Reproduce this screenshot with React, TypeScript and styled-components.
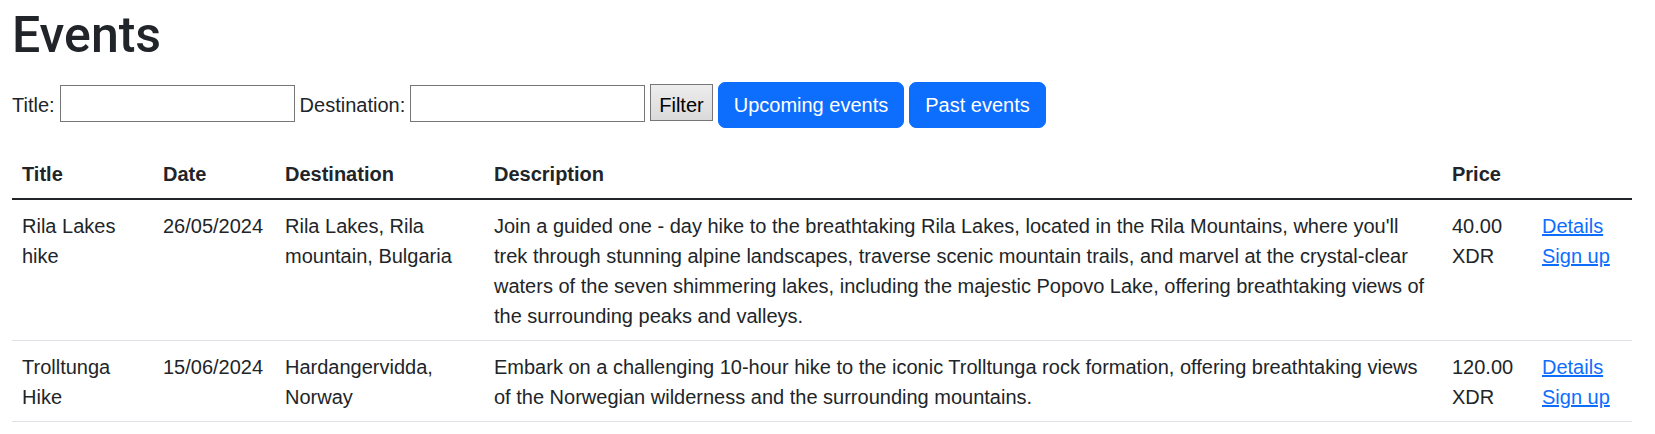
import React from "react";
import styled, { createGlobalStyle } from "styled-components";

const GlobalStyle = createGlobalStyle`
  *, *::before, *::after { box-sizing: border-box; }
  body {
    margin: 0;
    font-family: "Liberation Sans", Arial, sans-serif;
    font-size: 20px;
    line-height: 1.5;
    color: #212529;
    background: #fff;
  }
`;

const Page = styled.main`
  padding: 0 23px 0 12px;
`;

const Heading = styled.h1`
  margin: 0;
  padding-top: 5px;
  font-family: Roboto, "Liberation Sans", sans-serif;
  font-size: 50px;
  font-weight: 500;
  line-height: 60px;
  color: #212529;
`;

const FilterForm = styled.form`
  display: flex;
  align-items: baseline;
  gap: 5px;
  margin: 17px 0 20px;
`;

const Label = styled.label`
  display: flex;
  align-items: baseline;
  gap: 5px;
`;

const TextInput = styled.input`
  width: 235px;
  height: 37px;
  padding: 5px 2px 1px;
  border: 1px solid #767676;
  border-radius: 0;
  font: inherit;
  line-height: normal;
  color: #212529;
  background: #fff;
`;

const PlainButton = styled.button`
  height: 37px;
  padding: 5px 8px 0;
  border: 1px solid #767676;
  border-radius: 0;
  background: linear-gradient(#ededed, #dadada);
  font: inherit;
  line-height: 30px;
  color: #000;
  cursor: pointer;
`;

const PrimaryButton = styled.button`
  padding: 7px 15px;
  border: 1px solid #0d6efd;
  border-radius: 7px;
  background: #0d6efd;
  color: #fff;
  font: inherit;
  line-height: 30px;
  cursor: pointer;
`;

const Table = styled.table`
  width: 1620px;
  table-layout: fixed;
  border-collapse: collapse;
  vertical-align: top;
`;

const HeadCell = styled.th<{ $w: number }>`
  width: ${(p) => p.$w}px;
  padding: 11px 10px 9px;
  text-align: left;
  font-weight: 700;
  vertical-align: bottom;
  border-bottom: 2px solid #212529;
`;

const Row = styled.tr`
  border-bottom: 1px solid #dee2e6;
`;

const Cell = styled.td<{ $wrapInset?: number }>`
  padding: 11px ${(p) => 10 + (p.$wrapInset ?? 0)}px 9px 10px;
  vertical-align: top;
`;

const Actions = styled.div`
  display: flex;
  flex-direction: column;
  align-items: flex-start;
`;

const Link = styled.a`
  color: #0d6efd;
  text-decoration: underline;
`;

const columns = [
  { label: "Title", w: 141 },
  { label: "Date", w: 122 },
  { label: "Destination", w: 209 },
  { label: "Description", w: 958 },
  { label: "Price", w: 90 },
  { label: "", w: 100 },
];

const events = [
  {
    title: "Rila Lakes hike",
    date: "26/05/2024",
    destination: "Rila Lakes, Rila mountain, Bulgaria",
    description:
      "Join a guided one - day hike to the breathtaking Rila Lakes, located in the Rila Mountains, where you'll trek through stunning alpine landscapes, traverse scenic mountain trails, and marvel at the crystal-clear waters of the seven shimmering lakes, including the majestic Popovo Lake, offering breathtaking views of the surrounding peaks and valleys.",
    price: "40.00 XDR",
  },
  {
    title: "Trolltunga Hike",
    date: "15/06/2024",
    destination: "Hardangervidda, Norway",
    description:
      "Embark on a challenging 10-hour hike to the iconic Trolltunga rock formation, offering breathtaking views of the Norwegian wilderness and the surrounding mountains.",
    price: "120.00 XDR",
  },
];

export default function App() {
  return (
    <>
      <GlobalStyle />
      <Page>
        <Heading>Events</Heading>
        <FilterForm onSubmit={(e) => e.preventDefault()}>
          <Label>
            Title:
            <TextInput type="text" />
          </Label>
          <Label>
            Destination:
            <TextInput type="text" />
          </Label>
          <PlainButton type="submit">Filter</PlainButton>
          <PrimaryButton type="button">Upcoming events</PrimaryButton>
          <PrimaryButton type="button">Past events</PrimaryButton>
        </FilterForm>
        <Table>
          <thead>
            <tr>
              {columns.map((c, i) => (
                <HeadCell key={i} $w={c.w}>
                  {c.label}
                </HeadCell>
              ))}
            </tr>
          </thead>
          <tbody>
            {events.map((ev) => (
              <Row key={ev.title}>
                <Cell>{ev.title}</Cell>
                <Cell>{ev.date}</Cell>
                <Cell>{ev.destination}</Cell>
                <Cell $wrapInset={2}>{ev.description}</Cell>
                <Cell>{ev.price}</Cell>
                <Cell>
                  <Actions>
                    <Link href="#">Details</Link>
                    <Link href="#">Sign up</Link>
                  </Actions>
                </Cell>
              </Row>
            ))}
          </tbody>
        </Table>
      </Page>
    </>
  );
}
